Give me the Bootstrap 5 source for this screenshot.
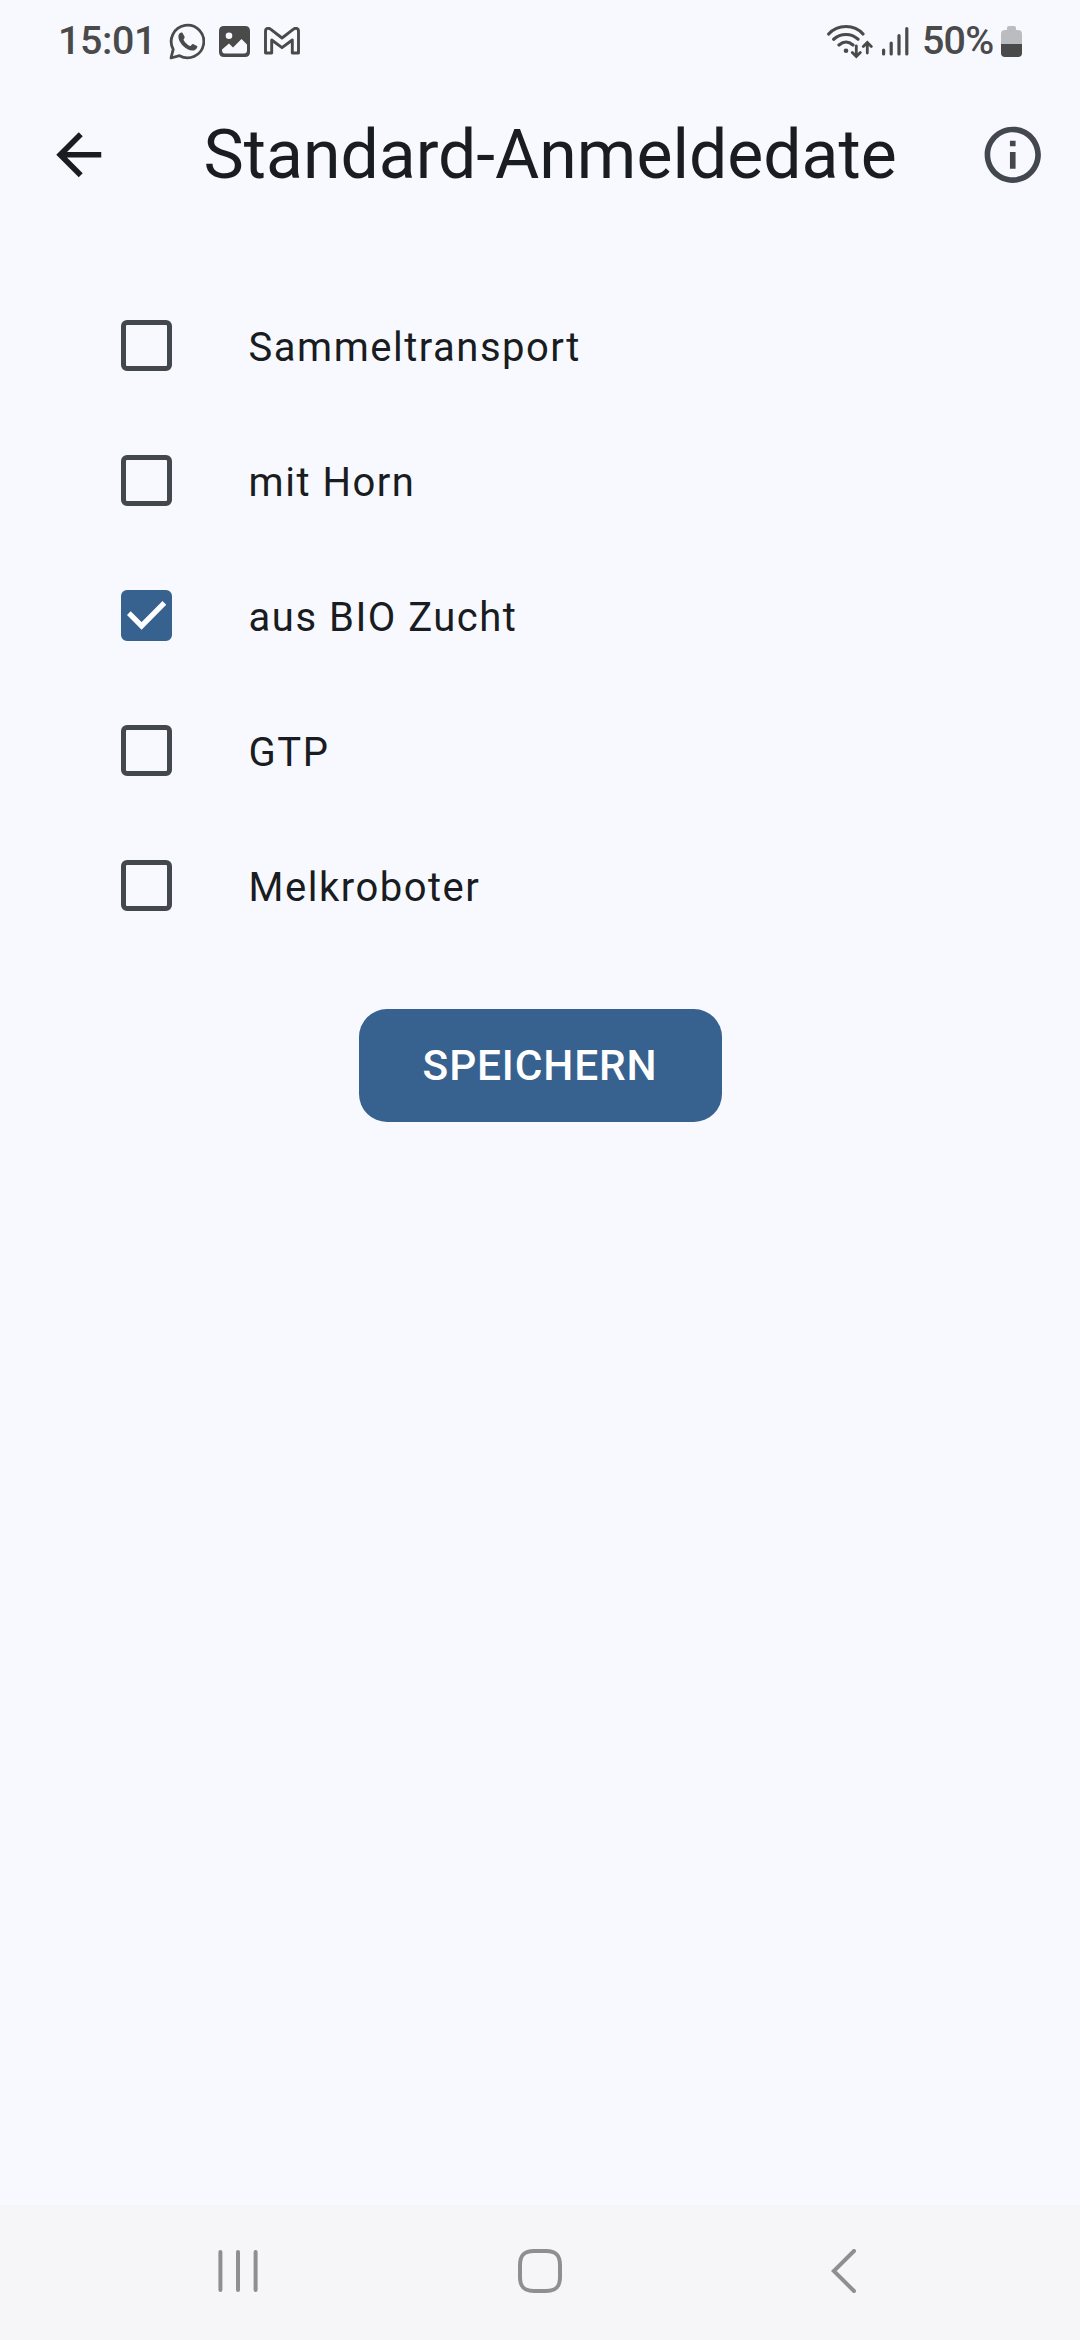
<!DOCTYPE html>
<html lang="de">
<head>
<meta charset="utf-8">
<meta name="viewport" content="width=device-width, initial-scale=1">
<title>Standard-Anmeldedaten</title>
<link href="https://cdn.jsdelivr.net/npm/bootstrap@5.3.0/dist/css/bootstrap.min.css" rel="stylesheet">
<style>
:root{--ink:#191c20;--soft:#43474e;--accent:#37618e;--sys:#4a4a4b}
body{background:#f8f9ff;color:var(--ink);font-family:Roboto,"Liberation Sans",sans-serif;height:2340px;overflow:hidden}
svg{display:block;flex:none}
.status-strip{height:84px;padding:0 58px;color:var(--sys);font-size:39.4px;font-weight:500;line-height:1}
.status-strip>div{height:82px}
.clock-text{width:111px;letter-spacing:-.4px}
.percent-text{width:79px;margin-left:12px;letter-spacing:-.8px}
.gallery-ic,.mail-ic{margin-left:14px}
.signal-ic{margin-left:8px}
.app-header{height:141px;padding:0 34px 0 45px}
.app-title{font-size:67.9px;font-weight:400;line-height:82px;margin:0 0 0 91px;flex:1;white-space:nowrap}
.icon-btn{background:none;border:0;padding:0;color:inherit}
.info-ic{color:var(--soft)}
.options{padding:53px 0 0 121px}
.option-row{height:135px;gap:77px;font-size:40px;letter-spacing:1.5px;line-height:56px}
.option-row .form-check-input{width:50.6px;height:50.6px;margin:0;border:5.6px solid var(--soft);border-radius:6px;background-color:transparent;flex:none}
.option-row .form-check-input:checked{background-color:var(--accent);border-color:var(--accent);background-size:50.6px 50.6px;background-origin:border-box;background-image:url("data:image/svg+xml,%3Csvg xmlns='http://www.w3.org/2000/svg' viewBox='0 0 50.6 50.6'%3E%3Cpath d='M7.8 23 20.4 35.6 43 12.8' fill='none' stroke='white' stroke-width='5.2'/%3E%3C/svg%3E")}
.option-row label{padding-top:4px}
.save-btn{width:363px;height:112.5px;border-radius:28px;background:var(--accent);color:#fff;font-size:42.4px;font-weight:500;line-height:1;letter-spacing:.85px;margin-top:56px;padding:2px 0 0}
.save-btn:hover{background:var(--accent);color:#fff}
.system-nav{height:135px;background:#f6f6f8;color:#8f8f8f;padding:0 222px 3px 218px}
.nav-back{margin-left:9px}
</style>
</head>
<body class="d-flex flex-column">
<header class="status-strip d-flex justify-content-between flex-shrink-0">
  <div class="d-flex align-items-center">
    <span class="clock-text">15:01</span>
    <svg width="36" height="37" viewBox="0 0 36 37" fill="none" stroke="currentColor"><path d="M2 35 4.200 26.300A16.300 16.300 0 1 1 10.500 32.700Z" stroke-width="2.800" stroke-linejoin="round"/><path d="M9.800 11.600c1-2.200 2.600-2.700 3.800-1.700l2.100 4.200c.3.8-1.400 2.300-1.100 3 1.500 2.700 3.700 4.800 6.300 6 .9.3 2.100-2.500 3.100-2.200l4 2.100c1 .6-.5 3.500-2.500 4.200-3.800 1-8-.9-11.600-4.500-3.100-3.100-5.400-7.600-4.100-11.100z" fill="currentColor" stroke="none"/></svg>
    <svg class="gallery-ic" width="31" height="31" viewBox="0 0 31 31"><path fill="currentColor" fill-rule="evenodd" d="M5 0H26Q31 0 31 5V26Q31 31 26 31H5Q0 31 0 26V5Q0 0 5 0ZM10 6.400a3.300 3.300 0 1 0 0 6.600 3.300 3.300 0 0 0 0-6.600ZM3 23.500V24Q3 27.500 6 27.500H25Q28 27.500 28 24.500V18.500L22.500 13 14 21.500 10 17.500Z"/></svg>
    <svg class="mail-ic" width="36" height="28" viewBox="0 0 36 28" fill="none" stroke="currentColor" stroke-width="2.900" stroke-linejoin="round"><path d="M1.500 26V4.500C1.500 1 4.500.5 6.500 2.200L18 11 29.500 2.200C31.500.5 34.500 1 34.500 4.500V26H28.300V13L18 20.700 7.700 13V26Z"/></svg>
  </div>
  <div class="d-flex align-items-center">
    <svg width="46" height="36" viewBox="0 0 46 36" fill="none" stroke="currentColor" stroke-width="3.200" stroke-linecap="round"><path d="M1.700 11Q8.500 3.500 19 3.500T36 11M6.700 16.200Q12 11.500 19 11.500T31 16.200M12 22Q15.500 19 19 19T26 22"/><circle cx="19" cy="27.800" r="2.300" fill="currentColor" stroke="none"/><path d="M29.300 23V33M25.300 29.500 29.300 33.500 33.300 29.500M40.300 30V20M36.300 23.500 40.300 19.500 44.300 23.500" stroke-width="2.800"/></svg>
    <svg class="signal-ic" width="29" height="30" viewBox="0 0 29 30" stroke="currentColor" stroke-width="3.200" stroke-linecap="round"><path d="M2.600 24V28M10.200 17V28M18 9.500V28M25.800 2.500V28"/></svg>
    <span class="percent-text">50%</span>
    <svg width="21" height="31" viewBox="0 0 21 31" fill="currentColor"><path opacity=".35" d="M6 2Q6 0 8 0H13Q15 0 15 2V4H17Q21 4 21 8V18H0V8Q0 4 4 4H6Z"/><path d="M0 18H21V27Q21 31 17 31H4Q0 31 0 27Z"/></svg>
  </div>
</header>
<nav class="app-header d-flex align-items-center flex-shrink-0">
  <button class="icon-btn" aria-label="Zurück"><svg width="67.500" height="67.500" viewBox="0 0 24 24" fill="currentColor"><path d="M20 11H7.830l5.590-5.590L12 4l-8 8 8 8 1.410-1.410L7.830 13H20v-2z"/></svg></button>
  <h1 class="app-title">Standard-Anmeldedate</h1>
  <button class="icon-btn info-ic" aria-label="Info"><svg width="67.500" height="67.500" viewBox="0 0 24 24" fill="currentColor"><path d="M11 7h2v2h-2zm0 4h2v6h-2zm1-9C6.480 2 2 6.480 2 12s4.480 10 10 10 10-4.480 10-10S17.520 2 12 2zm0 18c-4.410 0-8-3.590-8-8s3.590-8 8-8 8 3.590 8 8-3.590 8-8 8z"/></svg></button>
</nav>
<main class="flex-grow-1 d-flex flex-column">
  <div class="options">
    <div class="option-row d-flex align-items-center"><input class="form-check-input" type="checkbox" id="o1"><label for="o1">Sammeltransport</label></div>
    <div class="option-row d-flex align-items-center"><input class="form-check-input" type="checkbox" id="o2"><label for="o2">mit Horn</label></div>
    <div class="option-row d-flex align-items-center"><input class="form-check-input" type="checkbox" id="o3" checked><label for="o3">aus BIO Zucht</label></div>
    <div class="option-row d-flex align-items-center"><input class="form-check-input" type="checkbox" id="o4"><label for="o4">GTP</label></div>
    <div class="option-row d-flex align-items-center"><input class="form-check-input" type="checkbox" id="o5"><label for="o5">Melkroboter</label></div>
  </div>
  <button class="btn save-btn align-self-center">SPEICHERN</button>
</main>
<footer class="system-nav d-flex align-items-center justify-content-between flex-shrink-0">
  <svg width="40" height="44" viewBox="0 0 40 44" stroke="currentColor" stroke-width="4" stroke-linecap="round"><path d="M2.400 3V41M20 3V41M37.600 3V41"/></svg>
  <svg width="44" height="44" viewBox="0 0 44 44" fill="none" stroke="currentColor" stroke-width="4"><path d="M16 2H28C38 2 42 6 42 16V28C42 38 38 42 28 42H16C6 42 2 38 2 28V16C2 6 6 2 16 2Z"/></svg>
  <svg class="nav-back" width="27" height="44" viewBox="0 0 27 44" fill="none" stroke="currentColor" stroke-width="4" stroke-linecap="round"><path d="M23 2 2.800 22 23 42"/></svg>
</footer>
<script src="https://cdn.jsdelivr.net/npm/bootstrap@5.3.0/dist/js/bootstrap.bundle.min.js"></script>
</body>
</html>
